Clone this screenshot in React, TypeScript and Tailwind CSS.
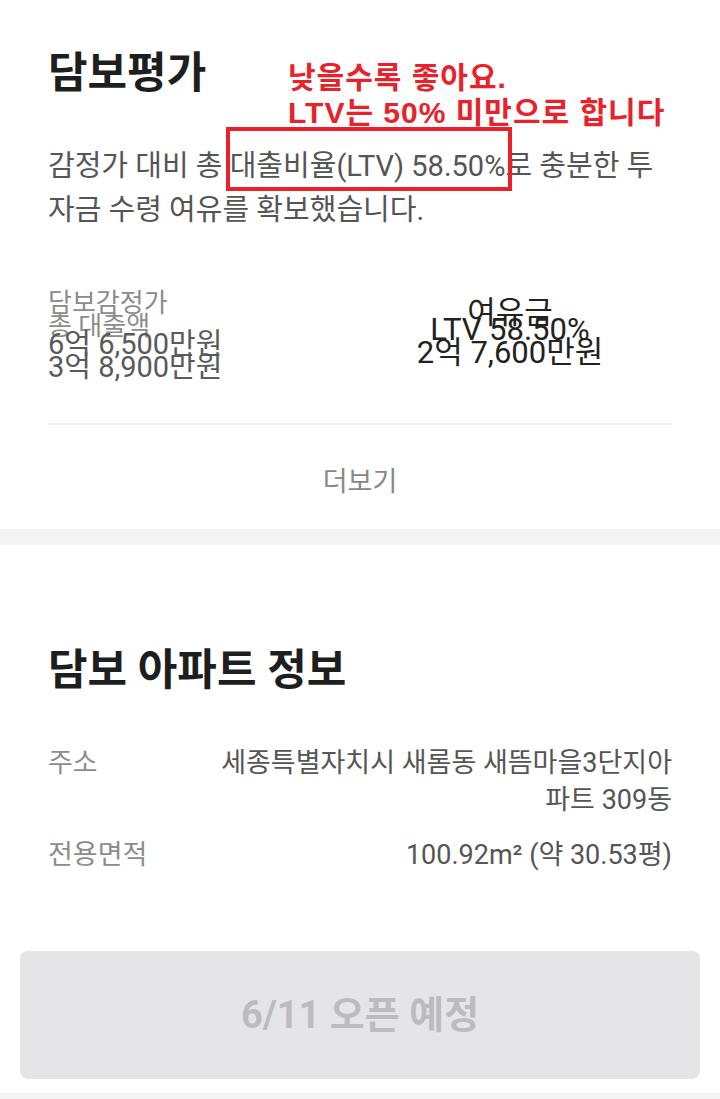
export default function App() {
    return (
        <div className="min-h-[1099px] bg-white font-['Roboto','Noto_Sans_CJK_KR',sans-serif]">
            <section className="relative bg-white px-12 pt-[52px] pb-[33px]">
                <h2 className="text-[43px] leading-[43px] font-bold text-[#1e1e1e]">담보평가</h2>

                {/* 빨간 주석 */}
                <div className="absolute left-[288px] top-[60px] font-['Liberation_Sans','Noto_Sans_CJK_KR',sans-serif] text-[30px] leading-[35px] font-bold tracking-[1px] text-[#e8212b]">
                    <div>낮을수록 좋아요.</div>
                    <div>LTV는 50% 미만으로 합니다</div>
                </div>
                <div className="absolute left-[226px] top-[127px] h-[64px] w-[286px] border-4 border-[#e8212b]" />

                <p className="mt-[49px] text-[29px] leading-[44px] text-[#555]">
                    감정가 대비 총 대출비율(LTV) 58.50%로 충분한 투자금 수령 여유를 확보했습니다.
                </p>

                <div className="mt-[58px] flex items-start">
                    <div className="w-[300px] shrink-0">
                        <div className="h-[23px] text-[26px] leading-[26px] text-[#8c8c8c]">담보감정가</div>
                        <div className="h-[17px] text-[26px] leading-[26px] text-[#8c8c8c]">총 대출액</div>
                        <div className="h-[23px] text-[29px] leading-[29px] whitespace-nowrap text-[#5a5a5a]">6억 6,500만원</div>
                        <div className="h-[29px] text-[29px] leading-[29px] whitespace-nowrap text-[#5a5a5a]">3억 8,900만원</div>
                    </div>
                    <div className="flex-1 pt-[7px] text-center text-[#222]">
                        <div className="h-[17px] text-[31px] leading-[31px]">여유금</div>
                        <div className="h-[23px] text-[31px] leading-[31px] whitespace-nowrap">LTV 58.50%</div>
                        <div className="h-[31px] text-[31px] leading-[31px] whitespace-nowrap">2억 7,600만원</div>
                    </div>
                </div>

                <div className="mt-[41px] h-[2px] bg-[#f0f0f0]" />

                <div className="mt-[44px] text-center text-[27px] leading-[27px] text-[#888]">더보기</div>
            </section>

            <div className="h-4 bg-[#f4f4f4]" />

            <section className="bg-white px-12 pt-[104px]">
                <h2 className="text-[43px] leading-[43px] font-bold text-[#1e1e1e]">담보 아파트 정보</h2>

                <div className="mt-[53px] flex items-start text-[27px] leading-[37px]">
                    <div className="w-[160px] shrink-0 text-[#8c8c8c]">주소</div>
                    <div className="flex-1 text-right text-[#555]">
                        세종특별자치시 새롬동 새뜸마을3단지아파트 309동
                    </div>
                </div>
                <div className="mt-[18px] flex items-start text-[27px] leading-[37px]">
                    <div className="w-[160px] shrink-0 text-[#8c8c8c]">전용면적</div>
                    <div className="flex-1 text-right text-[#555]">100.92m² (약 30.53평)</div>
                </div>
            </section>

            <div className="bg-white px-5 pt-[77px] pb-[14px]">
                <button className="flex h-[128px] w-full items-center justify-center rounded-lg bg-[#e5e5e8] text-[38px] font-bold text-[#bcbcbf]">
                    6/11 오픈 예정
                </button>
            </div>

            <div className="h-[6px] bg-[#f4f4f4]" />
        </div>
    );
}
